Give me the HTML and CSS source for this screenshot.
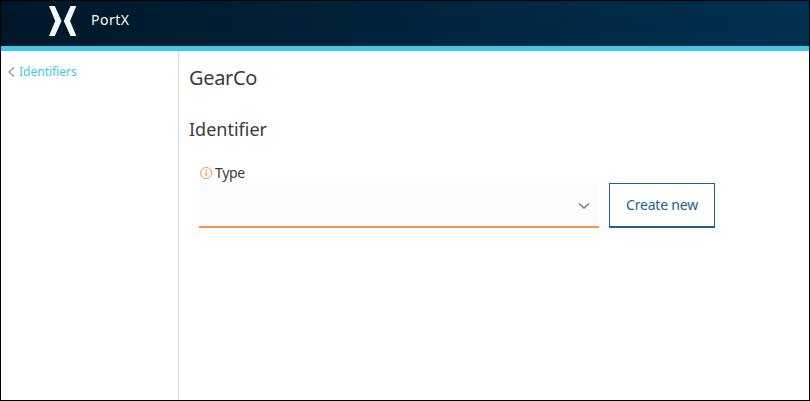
FILE: index.html
```html
<!DOCTYPE html>
<html lang="en">
<head>
<meta charset="utf-8">
<title>PortX</title>
<link rel="stylesheet" href="styles.css">
</head>
<body>
<div class="app">
  <header class="header">
    <svg class="logo" width="28" height="30" viewBox="0 0 28 30"><path d="M0 0h5.800l6.700 15-6.700 15H0l6.200-15zM27.300 0h-5.800l-6.700 15 6.700 15h5.800L21.100 15z"/></svg>
    <span class="brand">PortX</span>
  </header>
  <div class="body">
    <nav class="sidebar">
      <a class="back"><svg class="back-icon" width="7" height="10" viewBox="0 0 7 10"><path d="M6 .5 1 5l5 4.500"/></svg><span class="back-label">Identifiers</span></a>
    </nav>
    <main class="content">
      <h1 class="title">GearCo</h1>
      <h2 class="subtitle">Identifier</h2>
      <div class="form">
        <label class="label"><svg class="info" width="13" height="13" viewBox="0 0 13 13"><circle cx="6.200" cy="6" r="5.600"/><path class="info-mark" d="M6.200 5.200V9.200M6.200 2.800v1.300"/></svg><span class="label-text">Type</span></label>
        <div class="row">
          <div class="select"><svg class="chevron" width="12" height="8" viewBox="0 0 12 8"><path d="m1 1.500 5 4.700 5-4.700"/></svg></div>
          <button class="create"><span class="create-text">Create new</span></button>
        </div>
      </div>
    </main>
  </div>
</div>
</body>
</html>
```
FILE: styles.css
```css
* { box-sizing: border-box; }
body { margin: 0; font-family: "Noto Sans", "Open Sans", sans-serif; color: #3b3b3b; }
.app { width: 810px; height: 401px; border: 1px solid #000; background: #fff; display: flex; flex-direction: column; }
.header { height: 50px; flex: none; display: flex; align-items: flex-start; padding: 5px 0 0 48px; border-bottom: 5px solid #40c8e8; background: linear-gradient(90deg, #001728, #003050); }
.logo { fill: #f5f6f8; }
.brand { margin: 4px 0 0 14px; font-size: 14px; line-height: 20px; color: #f5f6f8; letter-spacing: .5px; }
.body { display: flex; flex: 1; }
.sidebar { width: 178px; padding: 13px 0 0 7px; border-right: 1px solid #dadada; }
.back { display: flex; align-items: center; height: 16px; color: #40c8e8; }
.back-icon { fill: none; stroke: #999; stroke-width: 1.500; }
.back-label { margin-left: 4px; font-size: 12px; line-height: 16px; letter-spacing: 0; }
.content { flex: 1; padding: 12px 0 0 10px; }
.title, .subtitle { margin: 0; font-weight: 400; }
.title { font-size: 20px; line-height: 30px; letter-spacing: -.35px; }
.subtitle { margin-top: 22px; font-size: 18px; line-height: 28px; }
.form { margin: 20px 0 0 10px; }
.label { display: flex; align-items: center; height: 20px; }
.info { margin-left: 1px; fill: none; stroke: #fa9448; stroke-width: 1; }
.info-mark { stroke-width: 1.300; }
.label-text { margin-left: 2px; font-size: 14px; line-height: 20px; letter-spacing: -.3px; }
.row { display: flex; gap: 10px; }
.select { width: 400px; height: 45px; display: flex; align-items: center; justify-content: flex-end; padding: 2px 9px 0 0; background: #fcfcfc; border-bottom: 2px solid #fa9448; }
.chevron { fill: none; stroke: #858585; stroke-width: 1.600; }
.create { width: 106px; height: 45px; padding: 0; border: 1px solid #1b618e; border-bottom-width: 2px; background: #fff; color: #1b618e; font: 14px/20px "Noto Sans", "Open Sans", sans-serif; letter-spacing: -.2px; white-space: nowrap; }
```
